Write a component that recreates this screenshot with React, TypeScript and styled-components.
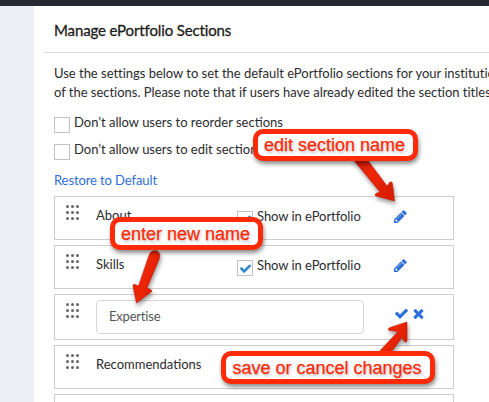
import React from "react";
import styled, { createGlobalStyle } from "styled-components";

const GlobalStyle = createGlobalStyle`
  * { box-sizing: border-box; }
  body {
    margin: 0;
    overflow: hidden;
    background: #fff;
    color: #2b2b2e;
    font: 13px/19px Lato, "Open Sans", sans-serif;
  }
`;

const Page = styled.div`
  position: relative;
  width: 489px;
  height: 402px;
  overflow: hidden;
  display: flex;
  flex-direction: column;
`;

const TopBar = styled.header`
  flex: none;
  height: 6px;
  background: #262932;
`;

const Body = styled.div`
  flex: 1;
  min-height: 0;
  display: flex;
`;

const Sidebar = styled.aside`
  flex: none;
  width: 34px;
  background: #eeeff4;
`;

const Main = styled.main`
  flex: 1;
  min-width: 0;
  padding-left: 10px;
  overflow: hidden;
`;

const TitleBar = styled.div`
  height: 47px;
  padding: 14px 0 0 10px;
  border-bottom: 1px solid #d9d9d9;
`;

const Title = styled.h1`
  margin: 0;
  font-size: 15px;
  line-height: 20px;
  font-weight: 400;
  letter-spacing: -0.13px;
  white-space: nowrap;
  color: #1d1d20;
  -webkit-text-stroke: 0.3px #1d1d20;
`;

const Content = styled.div`
  padding: 11px 0 0 10px;
`;

const Line = styled.div`
  height: 19px;
  white-space: nowrap;
  letter-spacing: -0.02px;
`;

const Options = styled.div`
  display: flex;
  flex-direction: column;
  gap: 8px;
  padding-top: 11px;
`;

const Option = styled.label`
  display: flex;
  align-items: flex-start;
  gap: 4px;
  height: 19px;
  white-space: nowrap;
`;

const Box = styled.span`
  flex: none;
  width: 16px;
  height: 16px;
  margin-top: 4px;
  border: 1px solid #c2c2c2;
  background: #fff;
  display: flex;
  align-items: center;
  justify-content: center;
`;

const Restore = styled.a`
  display: block;
  margin-top: 12px;
  height: 19px;
  letter-spacing: -0.1px;
  color: #2e6fd9;
`;

const List = styled.div`
  display: flex;
  flex-direction: column;
  gap: 5px;
  width: 400px;
  margin-top: 6px;
`;

const Row = styled.div<{ $tall?: boolean }>`
  display: grid;
  grid-template-columns: 41px 141px 157px 1fr;
  align-items: start;
  height: ${(p) => (p.$tall ? 46 : 44)}px;
  border: 1px solid #cdcdcd;
`;

const Cell = styled.div`
  padding-top: 9px;
  white-space: nowrap;
`;

const Grip = styled.div`
  display: grid;
  grid-template-columns: repeat(3, 3px);
  grid-auto-rows: 3px;
  gap: 3px 2px;
  padding: 8px 0 0 11px;
`;

const Dot = styled.span`
  border-radius: 50%;
  background: #66666a;
`;

const Show = styled.label`
  display: flex;
  align-items: flex-start;
  gap: 4px;
  padding-top: 10px;
  letter-spacing: -0.05px;
  white-space: nowrap;
`;

const Field = styled.input`
  grid-column: 2 / 4;
  width: 268px;
  height: 34px;
  margin-top: 5px;
  padding: 0 12px 3px;
  border: 1px solid #d6d6d6;
  border-radius: 4px;
  font: inherit;
  letter-spacing: -0.2px;
  color: #555;
`;

const Actions = styled.div<{ $pair?: boolean }>`
  grid-column: 4;
  display: flex;
  gap: 2px;
  padding-top: ${(p) => (p.$pair ? 11 : 11.5)}px;
  color: #2e6fd9;
`;

const Callout = styled.div<{ $x: number; $y: number; $w: number; $h: number }>`
  position: absolute;
  left: ${(p) => p.$x}px;
  top: ${(p) => p.$y}px;
  width: ${(p) => p.$w}px;
  height: ${(p) => p.$h}px;
  padding-right: 2px;
  border: 5px solid #ff2a08;
  border-radius: 10px;
  background: #fff;
  box-shadow: 1px 3px 4px rgba(0, 0, 0, 0.45);
  display: flex;
  align-items: center;
  justify-content: center;
  font: 18px/20px "Liberation Sans", Arial, sans-serif;
  color: #ff2a08;
  -webkit-text-stroke: 0.25px #ff2a08;
  text-shadow: 1px 2px 3px rgba(0, 0, 0, 0.28);
  white-space: nowrap;
`;

const Arrows = styled.svg`
  position: absolute;
  inset: 0;
  filter: drop-shadow(1px 3px 2px rgba(0, 0, 0, 0.4));
`;

const CHECK =
  "M1671 566q0 40-28 68l-724 724-136 136q-28 28-68 28t-68-28l-136-136-362-362q-28-28-28-68t28-68l136-136q28-28 68-28t68 28l294 295 656-657q28-28 68-28t68 28l136 136q28 28 28 68z";
const TIMES =
  "M1490 1322q0 40-28 68l-136 136q-28 28-68 28t-68-28l-294-294-294 294q-28 28-68 28t-68-28l-136-136q-28-28-28-68t28-68l294-294-294-294q-28-28-28-68t28-68l136-136q28-28 68-28t68 28l294 294 294-294q28-28 68-28t68 28l136 136q28 28 28 68t-28 68l-294 294 294 294q28 28 28 68z";
const PENCIL =
  "M363 1536l91-91-235-235-91 91v107h128v128h107zM886 608q0-22-22-22-10 0-17 7l-542 542q-7 7-7 17 0 22 22 22 10 0 17-7l542-542q7-7 7-17zM832 416l416 416-832 832h-416v-416zM1515 512q0 53-37 90l-166 166-416-416 166-165q36-38 90-38 53 0 91 38l235 234q37 39 37 91z";

function Icon({ d, width = 1792, size = 14 }: { d: string; width?: number; size?: number }) {
  return (
    <svg width={(size * width) / 1792} height={size} viewBox={`0 0 ${width} 1792`} fill="currentColor">
      <path d={d} />
    </svg>
  );
}

function Handle() {
  return (
    <Grip>
      {Array.from({ length: 9 }, (_, i) => (
        <Dot key={i} />
      ))}
    </Grip>
  );
}

const CheckedBox = styled(Box)`
  color: #3587d0;
`;

function SectionRow({ name, editable }: { name: string; editable?: boolean }) {
  return (
    <Row>
      <Handle />
      <Cell>{name}</Cell>
      {editable && (
        <>
          <Show>
            <CheckedBox>
              <Icon d={CHECK} size={13} />
            </CheckedBox>
            Show in ePortfolio
          </Show>
          <Actions>
            <Icon d={PENCIL} width={1536} size={15} />
          </Actions>
        </>
      )}
    </Row>
  );
}

export default function App() {
  return (
    <Page>
      <GlobalStyle />
      <TopBar />
      <Body>
        <Sidebar />
        <Main>
          <TitleBar>
            <Title>Manage ePortfolio Sections</Title>
          </TitleBar>
          <Content>
            <Line>Use the settings below to set the default ePortfolio sections for your institutio</Line>
            <Line>of the sections. Please note that if users have already edited the section titles</Line>
            <Options>
              <Option>
                <Box />
                Don’t allow users to reorder sections
              </Option>
              <Option>
                <Box />
                Don’t allow users to edit section
              </Option>
            </Options>
            <Restore>Restore to Default</Restore>
            <List>
              <SectionRow name="About" editable />
              <SectionRow name="Skills" editable />
              <Row $tall>
                <Handle />
                <Field defaultValue="Expertise" />
                <Actions $pair>
                  <Icon d={CHECK} size={15} />
                  <Icon d={TIMES} size={15} />
                </Actions>
              </Row>
              <SectionRow name="Recommendations" />
              <Row />
            </List>
          </Content>
        </Main>
      </Body>
      <Arrows width="489" height="402" viewBox="0 0 489 402">
        <defs>
          <linearGradient id="red" x1="0" y1="0" x2="1" y2="0.6">
            <stop offset="0" stopColor="#c91800" />
            <stop offset="0.5" stopColor="#ef2606" />
            <stop offset="1" stopColor="#d81e03" />
          </linearGradient>
        </defs>
        <g fill="url(#red)" stroke="#c41b06" strokeWidth="0.6" strokeLinejoin="round">
          <path d="M352 158L366 158L387 186L390 182Q392 181 392.500 184L394.500 201L376 196Q374 194.500 376 193.500L380 192Z" />
          <path d="M149.500 254Q152 249.500 157 251Q161 253 159.500 258L147 288L151 290Q153 291 151 292L136.500 303L133 286Q133 283 136 285L138.500 286Z" />
          <path d="M376 355L398 331.500L389 330.500Q387 329 390 327.500L407 322L407 341Q406 343 404 341L402 337.500L389 355Z" />
        </g>
      </Arrows>
      <Callout $x={253} $y={129} $w={165} $h={32}>edit section name</Callout>
      <Callout $x={110} $y={217} $w={153} $h={33}>enter new name</Callout>
      <Callout $x={221} $y={351} $w={214} $h={33}>save or cancel changes</Callout>
    </Page>
  );
}
